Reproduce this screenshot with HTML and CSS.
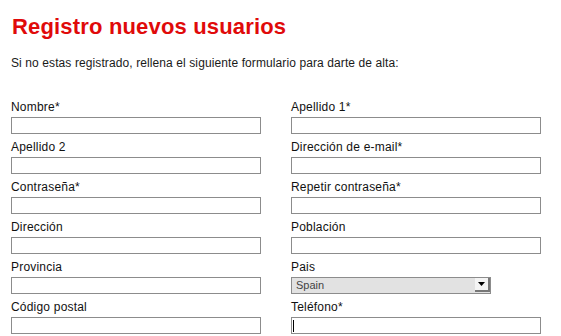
FILE: index.html
```html
<!DOCTYPE html>
<html>
<head>
<meta charset="utf-8">
<link rel="stylesheet" href="styles.css">
</head>
<body>
<div class="page">
  <h1 class="title">Registro nuevos usuarios</h1>
  <p class="intro">Si no estas registrado, rellena el siguiente formulario para darte de alta:</p>
  <div class="form">
    <div class="field"><label class="label">Nombre*</label><div class="input"></div></div>
    <div class="field"><label class="label">Apellido 1*</label><div class="input"></div></div>
    <div class="field"><label class="label">Apellido 2</label><div class="input"></div></div>
    <div class="field"><label class="label">Dirección de e-mail*</label><div class="input"></div></div>
    <div class="field"><label class="label">Contraseña*</label><div class="input"></div></div>
    <div class="field"><label class="label">Repetir contraseña*</label><div class="input"></div></div>
    <div class="field"><label class="label">Dirección</label><div class="input"></div></div>
    <div class="field"><label class="label">Población</label><div class="input"></div></div>
    <div class="field"><label class="label">Provincia</label><div class="input"></div></div>
    <div class="field"><label class="label">Pais</label>
      <div class="select"><span class="select-text">Spain</span><span class="select-btn"><svg width="7" height="4" viewBox="0 0 7 4"><path d="M0 0H7L3.5 4Z" fill="#000"/></svg></span></div>
    </div>
    <div class="field"><label class="label">Código postal</label><div class="input"></div></div>
    <div class="field"><label class="label">Teléfono*</label><div class="input focus"><span class="caret"></span></div></div>
  </div>
</div>
</body>
</html>
```
FILE: styles.css
```css
html, body { margin: 0; padding: 0; background: #fff; }
body { font-family: "Liberation Sans", Arial, sans-serif; color: #1a1a1a; }
.page { padding: 14px 0 0 11px; width: 530px; }
.title { margin: 0 0 0 1px; font-size: 22px; line-height: 26px; font-weight: bold; color: #e00a0a; letter-spacing: 0.17px; }
.intro { margin: 15px 0 0 0; font-size: 12px; line-height: 16px; color: #1a1a1a; letter-spacing: 0.1px; }
.form { display: grid; grid-template-columns: 250px 250px; column-gap: 30px; margin-top: 23px; }
.field { display: flex; flex-direction: column; height: 40px; box-sizing: border-box; padding-top: 5px; }
.label { font-size: 12px; line-height: 16px; height: 16px; margin-bottom: 2px; color: #111; letter-spacing: 0.2px; }
.input { box-sizing: border-box; height: 17px; border: 1px solid #8c8c8c; background: #fff; position: relative; }
.focus .caret { position: absolute; left: 1px; top: 2px; width: 1px; height: 12px; background: #000; }
.select { box-sizing: border-box; width: 200px; height: 17px; border: 1px solid #8c8c8c; background: #e2e2e2; display: flex; align-items: flex-start; justify-content: space-between; }
.select-text { font-size: 11px; line-height: 15px; color: #444; padding-left: 4px; }
.select-btn { box-sizing: border-box; width: 15px; height: 14px; background: #f4f4f4; border-bottom: 2px solid #777; border-right: 2px solid #777; display: flex; align-items: center; justify-content: center; }
```
